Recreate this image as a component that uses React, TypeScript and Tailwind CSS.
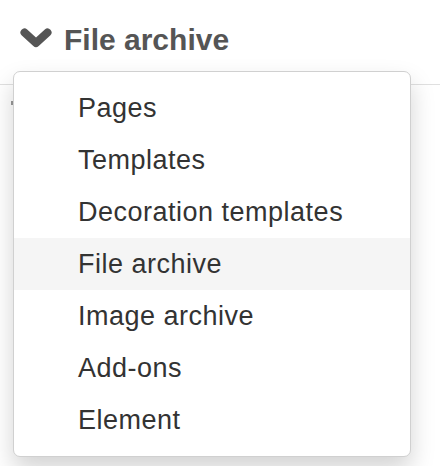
import React from "react";

const items = [
  "Pages",
  "Templates",
  "Decoration templates",
  "File archive",
  "Image archive",
  "Add-ons",
  "Element",
];

function Chevron() {
  return (
    <svg width="32" height="21" viewBox="0 0 32 21" className="shrink-0 mb-[4px]">
      <path
        d="M4.5 4.5 L16 15 L27.5 4.5"
        fill="none"
        stroke="#555555"
        strokeWidth="8"
        strokeLinecap="round"
        strokeLinejoin="round"
      />
    </svg>
  );
}

export default function App() {
  return (
    <div
      className="relative w-[440px] h-[466px] bg-white overflow-hidden"
      style={{ fontFamily: '"Liberation Sans", Arial, sans-serif' }}
    >
      <div className="flex items-center pt-[20px] pl-[20px] h-[60px]">
        <Chevron />
        <span className="ml-[12px] text-[30px] leading-[40px] font-bold text-[#555555]">
          File archive
        </span>
      </div>
      <div className="mt-[24px] border-t border-[#e0e0e0]">
        <div className="ml-[11px] mt-[16px] w-[2px] h-[4px] bg-[#999]"></div>
      </div>

      <div className="absolute left-[13px] top-[71px] w-[398px] bg-white border border-[#d0d0d0] rounded-[7px] shadow-[0_12px_24px_rgba(0,0,0,0.175)] py-[10px]">
        {items.map((item) => (
          <div
            key={item}
            className={
              "h-[52px] leading-[52px] pl-[64px] text-[27px] tracking-[0.5px] text-[#333333] " +
              (item === "File archive" ? "bg-[#f5f5f5]" : "")
            }
          >
            {item}
          </div>
        ))}
      </div>
    </div>
  );
}
